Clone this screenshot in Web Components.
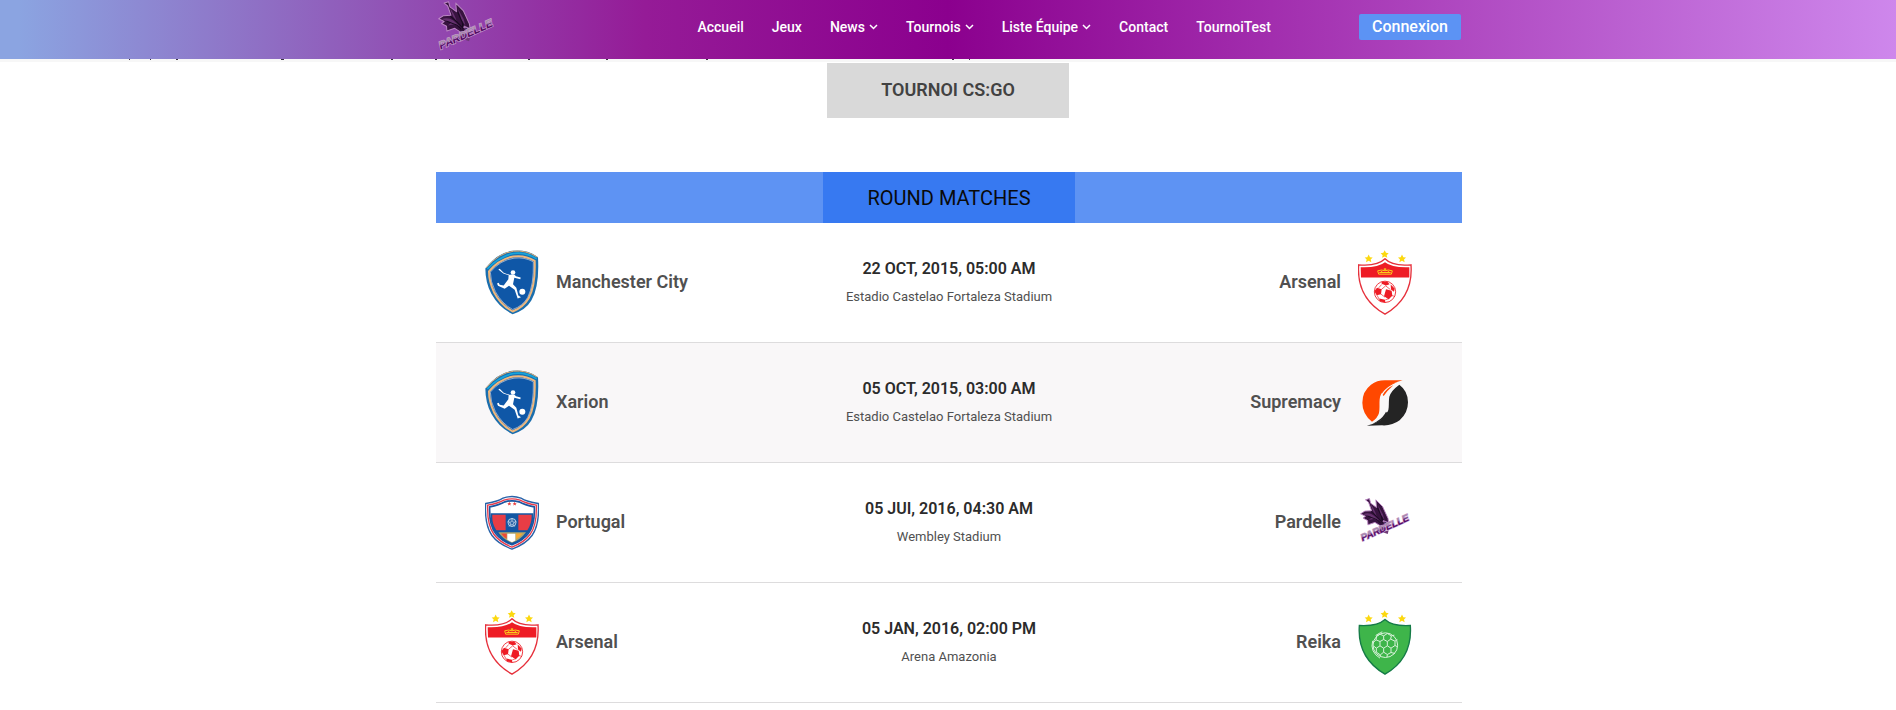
<!DOCTYPE html>
<html lang="fr">
<head>
<meta charset="utf-8">
<meta name="viewport" content="width=device-width, initial-scale=1">
<title>Pardelle</title>
<style>
body { margin: 0; background: #fff; font-family: Roboto, sans-serif; color: #505050; }
</style>
</head>
<body>
<site-header>
  <nav-item>Accueil</nav-item>
  <nav-item>Jeux</nav-item>
  <nav-item menu>News</nav-item>
  <nav-item menu>Tournois</nav-item>
  <nav-item menu>Liste Équipe</nav-item>
  <nav-item>Contact</nav-item>
  <nav-item>TournoiTest</nav-item>
</site-header>
<intro-edge></intro-edge>
<main>
  <tournament-title>TOURNOI CS:GO</tournament-title>
  <match-table>ROUND MATCHES</match-table>
</main>

<script>
const STARS = `<g fill="#fcd80f">${[[32, 15], [80, 2], [132, 15]].map(([x, y]) =>
  `<path transform="translate(${x} ${y})" d="M0 -2l4 8 8 1-6 6 2 8-8-4-8 4 2-8-6-6 8-1z"/>`).join('')}</g>`;

const LION = `<svg viewBox="0 0 162 194" width="54" height="65">
  <path fill="#1a6eae" d="M1 55Q38 7 82 2q45-5 77 19 5 88-20 130-17 29-56 41Q43 174 19 131 1 97 1 55z"/>
  <path fill="none" stroke="#e0ad73" stroke-width="3" d="M3 53Q42 8 86 3q36-4 71 18"/>
  <path fill="none" stroke="#15a5dc" stroke-width="5" d="M7 56Q44 18 85 10q37-5 70 16"/>
  <path fill="#0f57a7" stroke="#efb77c" stroke-width="6" d="M12 64Q43 26 86 19q33-5 63 13 3 73-18 112-15 26-48 40Q47 164 27 126 12 94 12 64z"/>
  <path fill="none" stroke="#c5d2df" stroke-width="2" d="M16 66Q45 30 87 24q31-4 58 11 2 70-17 107-14 25-45 36Q51 161 31 124 16 94 16 66z"/>
  <g fill="#fff"><circle cx="84" cy="67" r="7"/><circle cx="112" cy="125" r="9"/>
  <path d="M44 56l12 12q13 7 25 5 9-1 12 5l14 4-1 5-18-4-4 19 10 11 6 23 8 5-10 4-9-26-17-12-13 9-20-9-3-7 5-2 3 6 12 2 14-19 1-12-16-5-15-12z"/></g></svg>`;

const ARSENAL = `<svg viewBox="0 0 162 194" width="54" height="65">${STARS}
  <path fill="#fff" stroke="#e6303b" stroke-width="4" d="M2 44Q58 49 81 26q22 23 78 18 7 99-78 148Q-5 143 2 44z"/>
  <path fill="#ee1c25" d="M8 51Q60 53 81 36q21 17 73 15v31H9z"/>
  <g fill="none" stroke="#fccb1b" stroke-width="3"><path d="M62 72l-3-10q13-5 22 0 9-5 22 0l-3 10zM64 67h34M81 62v-8M77 57h8M71 62v5M91 62v5"/></g>
  <circle cx="81" cy="125" r="32" fill="#fff" stroke="#ef3941" stroke-width="3"/>
  <path fill="#ee1c25" d="M84 117l17 5 2 15-11 10-14-9zM57 113l14 4-2 15-13 3-7-12zM71 95l17 0 7 7-11 4-13-5zM98 103l12 12-2 10-9-7zM64 145l17 4 1 8-17-4z"/>
  <path fill="none" stroke="#ee1c25" stroke-width="2" d="M70 118l13-11 14 11M69 132l12 9M101 136l10 3M82 149l12-4M57 135l7 13M71 103l-9 10"/></svg>`;

const REIKA = `<svg viewBox="0 0 162 194" width="54" height="65">${STARS}
  <path fill="#3eb54a" stroke="#157b47" stroke-width="4" d="M4 46Q58 49 81 28q22 21 76 18 7 99-76 146Q-3 143 4 46z"/>
  <g fill="none" stroke="#d8f2da" stroke-width="3"><circle cx="82" cy="105" r="37"/>
  <path d="M44 92q-9 33 22 52M53 76l15-9 5-2M66 94l11-6 11 6v13l-11 7-11-7zM88 94l10-7 13 6v13l-12 8-11-7M77 88V77l11-7 12 7-2 10M66 94l-12-5-8 8M54 89l2-12 10-5 11 5M77 114v12l-10 8-12-8v-12l11-7M55 114l-9-7M77 126l11 7 11-6v-13M88 133l-1 8M99 127l12 3M67 134v5M111 93l7-5M111 106l8 4M100 77l9-2"/></g></svg>`;

const PORTUGAL = `<svg viewBox="0 0 162 164" width="54" height="55">
  <path fill="#fff" stroke="#2862a8" stroke-width="4" d="M2 25Q37 20 54 9q27-10 54 0 17 11 52 16 4 64-19 96-18 25-60 41Q39 146 21 121-2 89 2 25z"/>
  <path fill="#fff" stroke="#e73a4b" stroke-width="4" d="M8 30Q39 25 57 15q24-8 48 0 18 10 49 15 2 61-19 88-17 23-54 38Q44 141 27 118 6 90 8 30z"/>
  <path fill="#fff" stroke="#1c55a1" stroke-width="5" d="M14 35Q43 30 60 20q21-6 42 0 17 10 46 15 2 55-18 80-16 21-49 34-33-13-49-34Q12 90 14 35z"/>
  <path fill="#1357a3" d="M17 54h128v22l-9 30-27 31-28 12-28-12-27-31-9-30z"/>
  <path fill="#e83d45" d="M22 59h40v46H34Q20 84 22 59zM100 59h40q1 25-13 46h-27z"/>
  <path fill="#b0a66b" d="M40 111h83q-16 22-42 32-25-9-41-32z"/>
  <path fill="#ef4835" d="M48 115h17v16q-9-5-17-16z"/><path fill="#fff" d="M67 116h24v20l-10 5-14-7z"/><path fill="#f7aa34" d="M93 115h20q-8 11-20 17z"/>
  <circle cx="81" cy="82" r="12" fill="#2e68aa" stroke="#b0cee8" stroke-width="3"/><path fill="none" stroke="#d6e4f2" stroke-width="2" d="M75 82l6-5 6 5-3 7h-7zM81 77v-8M87 82l7-3M84 89l5 5M77 89l-5 5M75 82l-7-3"/>
  <path fill="#e84143" d="M73 20l2 4h4l-3 3 1 4-4-2-4 2 1-4-3-3h4zM89 20l2 4h4l-3 3 1 4-4-2-4 2 1-4-3-3h4z"/></svg>`;

const SUPREMACY = `<svg viewBox="0 0 138 138" width="46" height="46">
  <path fill="#ff4800" d="M122 1Q79 11 61 36c-14 19-5 40-10 63q-4 15-21 26Q1 102 1 68 1 34 27 14 46 0 72 1z"/>
  <path fill="#ff4800" d="M58 39Q69 13 108 5 73 19 60 40zM62 45Q72 26 94 16q-19 17-29 32z"/>
  <path fill="#242424" d="M112 14q26 19 26 53 0 32-25 54-23 17-53 15l-46 1q34-8 54-27c18-19 10-37 14-60q5-18 30-36z"/>
  <path fill="#242424" d="M82 92Q72 119 31 132q35-17 47-38zM75 98q-8 18-30 26 20-13 27-29z"/></svg>`;

const pardelle = (w, h) => `<svg viewBox="0 0 164 146" width="${w}" height="${h}" preserveAspectRatio="xMidYMin">
  <g stroke="#bb85c4" stroke-width="3" stroke-linejoin="round">
  <path fill="#37133f" d="M66 91L49 80 26 88l-1-14-15-8 8-6L2 52l14-9 22-1Q31 22 28 14L18 6l13-4 4 15 19 14L52 6 74 28l18 39 3 19-14 3-3 15-12-4z"/></g>
  <path fill="#64316e" d="M10 53q20-7 35 4l18 16-18-4-16 3 10-9zM34 20q14 16 21 41l-11-16zM58 22l17 31 6 20-12-17z"/>
  <path fill="none" stroke="#180a20" stroke-width="3" d="M36 44l18 16 17 17M58 33l17 39M25 59l31 12 12 12M71 60l2 23"/>
  <path fill="#aa76b6" d="M76 72l15 6 7 12-9-3-5 6-8-7 6-4-8-4z"/><path fill="#1c0a24" d="M80 78l8 4-6 4z"/>
  <path fill="#6f3a78" d="M69 88l10 11 8 3-8 8 15-4-3 12-23-8-13 3 8-11z"/>
  <g transform="translate(8 142) rotate(-24)" font-family="Liberation Sans, sans-serif" font-size="32" font-weight="bold" font-style="italic"><text fill="url(#ink)" stroke="#c59acb" stroke-width="4" paint-order="stroke">PARDELLE</text></g>
  <defs><linearGradient id="ink" gradientUnits="userSpaceOnUse" x1="0" y1="-23" x2="0" y2="0"><stop offset=".35" stop-color="#a58aaa"/><stop offset=".6" stop-color="#550b64"/></linearGradient></defs></svg>`;

const CRESTS = { lion: LION, arsenal: ARSENAL, reika: REIKA, portugal: PORTUGAL, supremacy: SUPREMACY, pardelle: pardelle(50, 50), logo: pardelle(56, 52) };

function define(name, render) {
  customElements.define(name, class extends HTMLElement {
    constructor() { super(); this.attachShadow({ mode: 'open' }); }
    connectedCallback() { this.shadowRoot.innerHTML = render(this); }
  });
}

define('team-crest', el => `
  <style>:host { display: flex; flex: none; align-items: center; justify-content: center; } svg { display: block; }</style>
  ${CRESTS[el.getAttribute('name')]}`);

define('nav-item', el => `
  <style>
    :host { display: block; }
    a { display: flex; align-items: center; gap: 4px; color: #fff; text-decoration: none; font-size: 14px; font-weight: 500; line-height: 20px; white-space: nowrap; }
  </style>
  <a href="#"><slot></slot>${el.hasAttribute('menu') ? '<svg width="9" height="6" viewBox="0 0 9 6" fill="none" stroke="#fff" stroke-width="1.500"><path d="M1 1l3.500 3.500L8 1"/></svg>' : ''}</a>`);

define('site-header', () => `
  <style>
    :host { display: block; position: sticky; top: 0; z-index: 1; background: linear-gradient(90deg, #8ba4e1 1%, #951b97 34%, #8b008e 50%, #ce87ec); box-shadow: 0 3px 0 rgba(0, 0, 0, .03); }
    header { box-sizing: border-box; max-width: 1140px; height: 59px; margin: 0 auto; padding: 0 57px 5px 60px; display: flex; align-items: center; }
    .logo { margin-right: auto; }
    nav { display: flex; gap: 28px; margin-right: 88px; }
    button { border: 0; border-radius: 2px; padding: 0 13px; background: #5c93f4; color: #fff; font: 500 16px/26px Roboto, sans-serif; }
  </style>
  <header><a class="logo" href="#" aria-label="Pardelle"><team-crest name="logo"></team-crest></a>
  <nav><slot></slot></nav><button type="button">Connexion</button></header>`);

/* Descenders of the introduction line that has scrolled under the header. */
define('intro-edge', () => `
  <style>:host { display: block; position: relative; z-index: 2; height: 1px; overflow: hidden; } svg { display: block; }</style>
  <svg width="1000" height="1" aria-hidden="true"><path stroke="#3c3347" d="M129 .5h1M150 .5h1M176 .5h2M281 .5h3M391 .5h2M435 .5h2M449 .5h1M528 .5h2M606 .5h2M706 .5h2M952 .5h2M969 .5h1"/></svg>`);

define('tournament-title', () => `
  <style>
    :host { display: flex; justify-content: center; padding-top: 3px; }
    h1 { margin: 0; padding: 0 54px 2px; background: #d9d9d9; color: #424242; font-size: 18px; font-weight: 600; line-height: 53px; }
  </style><h1><slot></slot></h1>`);

const MATCHES = [
  ['lion', 'Manchester City', '22 OCT, 2015, 05:00 AM', 'Estadio Castelao Fortaleza Stadium', 'Arsenal', 'arsenal'],
  ['lion', 'Xarion', '05 OCT, 2015, 03:00 AM', 'Estadio Castelao Fortaleza Stadium', 'Supremacy', 'supremacy'],
  ['portugal', 'Portugal', '05 JUI, 2016, 04:30 AM', 'Wembley Stadium', 'Pardelle', 'pardelle'],
  ['arsenal', 'Arsenal', '05 JAN, 2016, 02:00 PM', 'Arena Amazonia', 'Reika', 'reika']
];

define('match-table', () => `
  <style>
    :host { display: block; box-sizing: border-box; max-width: 1140px; margin: 54px auto 0; padding: 0 56px 0 58px; }
    table { width: 100%; table-layout: fixed; border-collapse: separate; border-spacing: 0; }
    th, td { padding: 0; }
    th { background: #5e93f3; color: #0a0a0a; font-size: 20px; font-weight: 400; line-height: 49px; }
    th span { display: block; width: 252px; margin: 0 auto; padding-top: 2px; background: #3779f1; }
    td { box-sizing: border-box; height: 120px; border-bottom: 1px solid #dddcdd; vertical-align: middle; text-align: center; }
    .shaded { background: #f9f7f8; }
    .team { display: flex; align-items: center; gap: 17px; padding: 0 50px 0 49px; font-size: 18px; font-weight: 600; line-height: 24px; }
    .team span { padding-bottom: 2px; }
    .away { flex-direction: row-reverse; }
    team-crest { width: 54px; }
    time, p { display: block; margin: 0; line-height: 28px; }
    time { color: #2b2b2b; font-size: 16px; font-weight: 600; }
    p { font-size: 13px; }
  </style>
  <table>
    <thead><tr><th colspan="3"><span><slot></slot></span></th></tr></thead>
    <tbody>${MATCHES.map(([hc, home, date, place, away, ac], i) => `<tr${i === 1 ? ' class="shaded"' : ''}>
      <td><div class="team"><team-crest name="${hc}"></team-crest><span>${home}</span></div></td>
      <td><time>${date}</time><p>${place}</p></td>
      <td><div class="team away"><team-crest name="${ac}"></team-crest><span>${away}</span></div></td>
    </tr>`).join('')}</tbody>
  </table>`);
</script>
</body>
</html>
